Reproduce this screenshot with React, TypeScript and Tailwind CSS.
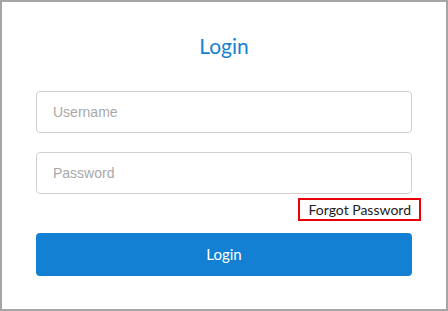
import React from 'react';

export default function App() {
  return (
    <div className="w-[448px] h-[311px] border-2 border-[#a6a6a6] bg-white px-[34px] pt-[31px] font-['Lato',sans-serif]">
      <h1 className="text-center text-[21px] leading-[25px] text-[#1681d2] mb-[33px]">Login</h1>

      <form className="flex flex-col" onSubmit={(e) => e.preventDefault()}>
        <input
          type="text"
          placeholder="Username"
          className="h-[42px] w-full rounded-[4px] border border-[#d0d0d0] px-[16px] text-[14px] font-['Liberation_Sans',Arial,sans-serif] text-[#333] placeholder:text-[#a9a9a9] outline-none"
        />
        <input
          type="password"
          placeholder="Password"
          className="mt-[19px] h-[42px] w-full rounded-[4px] border border-[#d0d0d0] px-[16px] text-[14px] font-['Liberation_Sans',Arial,sans-serif] text-[#333] placeholder:text-[#a9a9a9] outline-none"
        />

        <div className="mt-[4px] flex justify-end">
          {/* highlighted link */}
          <a href="#" className="-mr-[9px] border-2 border-[#e8000b] px-[8px] text-[14px] leading-[19px] text-[#222]">
            Forgot Password
          </a>
        </div>

        <button
          type="submit"
          className="mt-[12px] h-[43px] w-full rounded-[4px] bg-[#1380d3] text-[15px] text-white"
        >
          Login
        </button>
      </form>
    </div>
  );
}
